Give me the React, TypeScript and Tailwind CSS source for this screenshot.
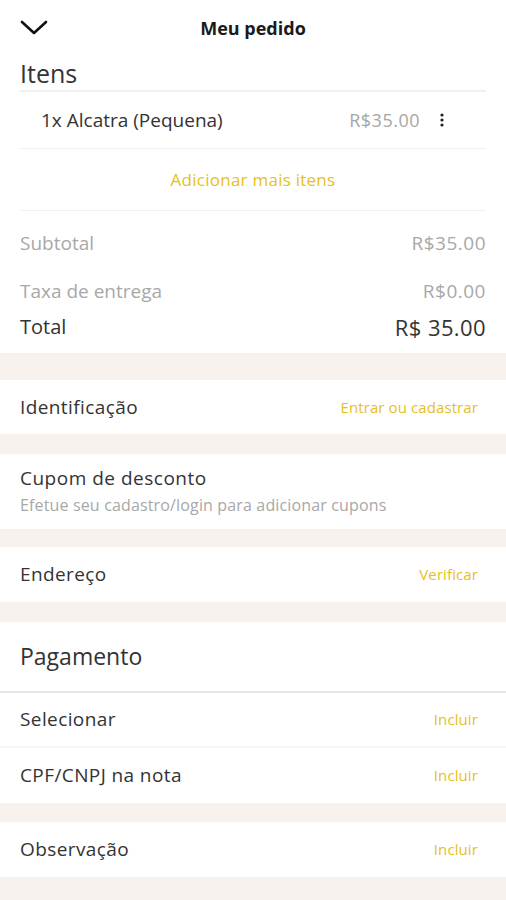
import React from "react";

const font = { fontFamily: '"Open Sans", "Noto Sans", sans-serif' };

function Band({ h }: { h: string }) {
  return <div className={`${h} shrink-0 bg-[#f7f2ed]`} />;
}

function Row({ title, action, h }: { title: string; action?: string; h: string }) {
  return (
    <div className={`${h} shrink-0 flex items-center justify-between pl-5 pr-7 bg-white`}>
      <span className="text-[19px] tracking-[0.4px] text-[#333333]">{title}</span>
      {action && <span className="text-[15px] tracking-[0.1px] text-[#e6bf1f]">{action}</span>}
    </div>
  );
}

export default function App() {
  return (
    <div style={font} className="w-[506px] overflow-hidden bg-white flex flex-col">
      {/* header */}
      <div className="h-[56px] shrink-0 relative flex items-center justify-center">
        <svg
          className="absolute left-[20px] top-[20px]"
          width="28"
          height="16"
          viewBox="0 0 28 16"
          fill="none"
        >
          <polyline points="2,2 14,13 26,2" stroke="#111" strokeWidth="2.6" strokeLinecap="round" strokeLinejoin="round" />
        </svg>
        <span className="text-[18px] font-bold text-[#1a1a1a]">Meu pedido</span>
      </div>
      <div className="h-[34px] shrink-0 flex items-center px-5">
        <span className="text-[25px] leading-none text-[#333333]">Itens</span>
      </div>
      <div className="mx-5 h-[2px] shrink-0 bg-[#f0f0f0]" />
      <div className="h-[56px] shrink-0 flex items-center pl-[41px] pr-[62px]">
        <span className="text-[19px] text-[#333333] flex-1">1x Alcatra (Pequena)</span>
        <span className="text-[18px] tracking-[0.5px] text-[#a6a6a6]">R$35.00</span>
        <span className="ml-[20px] flex justify-center">
          <svg width="4" height="14" viewBox="0 0 4 14">
            <circle cx="2" cy="2" r="1.6" fill="#222" />
            <circle cx="2" cy="7" r="1.6" fill="#222" />
            <circle cx="2" cy="12" r="1.6" fill="#222" />
          </svg>
        </span>
      </div>
      <div className="mx-5 h-[1px] shrink-0 bg-[#f0f0f0]" />
      <div className="h-[61px] shrink-0 flex items-center justify-center">
        <span className="text-[17px] tracking-[0.25px] text-[#e8bf17]">Adicionar mais itens</span>
      </div>
      <div className="mx-5 h-[1px] shrink-0 bg-[#f0f0f0]" />
      <div className="pt-[8px] pb-[14px] px-5 shrink-0 flex flex-col">
        <div className="h-[48px] flex items-center justify-between">
          <span className="text-[19px] text-[#a8a8a8]">Subtotal</span>
          <span className="text-[19px] tracking-[0.5px] text-[#a8a8a8]">R$35.00</span>
        </div>
        <div className="h-[48px] flex items-center justify-between">
          <span className="text-[19px] text-[#a8a8a8]">Taxa de entrega</span>
          <span className="text-[19px] tracking-[0.5px] text-[#a8a8a8]">R$0.00</span>
        </div>
        <div className="h-[24px] flex items-center justify-between">
          <span className="text-[20px] text-[#333333]">Total</span>
          <span className="text-[22px] tracking-[0.4px] text-[#333333]">R$ 35.00</span>
        </div>
      </div>
      <Band h="h-[27px]" />
      <Row h="h-[54px]" title="Identificação" action="Entrar ou cadastrar" />
      <Band h="h-[20px]" />
      <div className="h-[75px] shrink-0 flex flex-col justify-center px-5 pb-[3px] bg-white">
        <span className="text-[19px] tracking-[0.5px] leading-[26px] text-[#333333]">Cupom de desconto</span>
        <span className="text-[16px] tracking-[0.15px] leading-[22px] mt-[3px] text-[#a8a8a8]">
          Efetue seu cadastro/login para adicionar cupons
        </span>
      </div>
      <Band h="h-[18px]" />
      <Row h="h-[55px]" title="Endereço" action="Verificar" />
      <Band h="h-[20px]" />
      <div className="h-[69px] shrink-0 flex items-center px-5">
        <span className="text-[23px] text-[#333333]">Pagamento</span>
      </div>
      <div className="h-[2px] shrink-0 bg-[#e6e6e6]" />
      <Row h="h-[53px]" title="Selecionar" action="Incluir" />
      <div className="h-[2px] shrink-0 bg-[#f5f5f5]" />
      <Row h="h-[55px]" title="CPF/CNPJ na nota" action="Incluir" />
      <Band h="h-[19px]" />
      <Row h="h-[55px]" title="Observação" action="Incluir" />
      <Band h="h-[23px]" />
    </div>
  );
}
